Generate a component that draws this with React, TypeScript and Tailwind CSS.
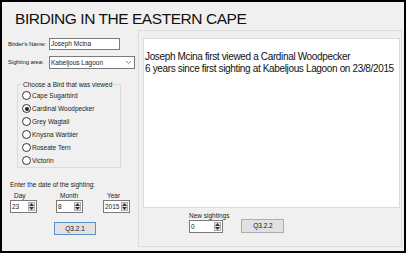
const birds = ['Cape Sugarbird', 'Cardinal Woodpecker', 'Grey Wagtail', 'Knysna Warbler', 'Roseate Tern', 'Victorin'];

function Spinner({ value, w }: { value: string; w: string }) {
  return (
    <div className={`flex h-[13px] ${w} border border-[#7a7a7a] bg-white`}>
      <span className="flex-1 pl-[1px] leading-[11px]">{value}</span>
      <div className="my-[1px] mr-[1px] flex w-[7px] flex-col items-center justify-center gap-[1px] border border-[#adadad] bg-[#e5e5e5]">
        <svg width="5" height="3" viewBox="0 0 5 3"><path d="M0 3 L2.5 0 L5 3 Z" fill="#333" /></svg>
        <svg width="5" height="3" viewBox="0 0 5 3"><path d="M0 0 L2.5 3 L5 0 Z" fill="#333" /></svg>
      </div>
    </div>
  );
}

function Radio({ label, checked }: { label: string; checked?: boolean }) {
  return (
    <div className="flex h-[13px] items-center gap-[1px]">
      <span className="flex h-[9px] w-[9px] items-center justify-center rounded-full border border-[#333] bg-white">
        {checked && <span className="h-[4px] w-[4px] rounded-full bg-[#222]" />}
      </span>
      <span>{label}</span>
    </div>
  );
}

export default function App() {
  return (
    <div className="flex h-[253px] w-[406px] flex-col border-2 border-black bg-[#f0f0f0] font-['Liberation_Sans',Arial,sans-serif] text-[6.5px] text-[#222]">
      <h1 className="h-[28px] whitespace-nowrap pl-[13px] pt-[7px] text-[15.5px] leading-[19px] tracking-[-0.45px] text-[#111]">BIRDING IN THE EASTERN CAPE</h1>

      <div className="flex flex-1 pb-[4px] pr-[2px]">
        {/* left column */}
        <div className="flex w-[136px] flex-col pl-[6px] pt-[8px]">
          <div className="flex h-[12px] items-center">
            <span className="w-[41px] whitespace-nowrap text-[6px] tracking-[-0.1px]">Birder's Name:</span>
            <div className="flex h-[12px] w-[71px] items-center border border-[#7a7a7a] bg-white pl-[1px]">Joseph Mcina</div>
          </div>
          <div className="mt-[6px] flex h-[13px] items-center">
            <span className="w-[41px] whitespace-nowrap text-[6px] tracking-[-0.1px]">Sighting area:</span>
            <div className="flex h-[13px] w-[86px] items-center justify-between border border-[#7a7a7a] bg-white pl-[1px] pr-[3px]">
              <span>Kabeljous Lagoon</span>
              <svg width="5" height="3" viewBox="0 0 5 3"><path d="M0 0 L2.5 2.5 L5 0" fill="none" stroke="#666" strokeWidth="0.8" /></svg>
            </div>
          </div>

          <fieldset className="ml-[9px] mt-[12px] h-[87px] w-[104px] border border-[#dcdcdc] pl-[4px]">
            <legend className="px-[1px] leading-[7px]">Choose a Bird that was viewed</legend>
            <div className="mt-[1px] flex flex-col">
              {birds.map((b) => (
                <Radio key={b} label={b} checked={b === 'Cardinal Woodpecker'} />
              ))}
            </div>
          </fieldset>

          <div className="mt-[12px] pl-[2px]">Enter the date of the sighting:</div>
          <div className="mt-[2px] flex pl-[2px]">
            <div className="flex w-[46px] flex-col">
              <span className="pl-[4px] leading-[8px]">Day</span>
              <Spinner value="23" w="w-[27px]" />
            </div>
            <div className="flex w-[47px] flex-col">
              <span className="pl-[4px] leading-[8px]">Month</span>
              <Spinner value="8" w="w-[27px]" />
            </div>
            <div className="flex w-[30px] flex-col">
              <span className="pl-[4px] leading-[8px]">Year</span>
              <Spinner value="2015" w="w-[27px]" />
            </div>
          </div>
          <div className="mt-[9px] pl-[46px]">
            <button className="h-[13px] w-[42px] border border-[#5b8fd0] bg-[#e1e1e1] text-[6.5px] leading-[11px] text-[#111]">Q3.2.1</button>
          </div>
        </div>

        {/* right panel */}
        <div className="flex flex-1 flex-col border border-[#dcdcdc] pl-[4px] pr-[1px] pt-[7px]">
          <div className="h-[170px] border border-[#dcdcdc] bg-white pl-[1px] pt-[12px] text-[10px] leading-[12px] tracking-[-0.35px] text-[#111]">
            <div>Joseph Mcina first viewed a Cardinal Woodpecker</div>
            <div>6 years since first sighting at Kabeljous Lagoon on 23/8/2015</div>
          </div>
          <div className="mt-[4px] flex items-end pl-[46px]">
            <div className="flex flex-col">
              <span className="leading-[8px]">New sightings</span>
              <Spinner value="0" w="w-[34px]" />
            </div>
            <button className="ml-[12px] h-[14px] w-[43px] border border-[#adadad] bg-[#e1e1e1] text-[6.5px] leading-[12px] text-[#111]">Q3.2.2</button>
          </div>
        </div>
      </div>
    </div>
  );
}
